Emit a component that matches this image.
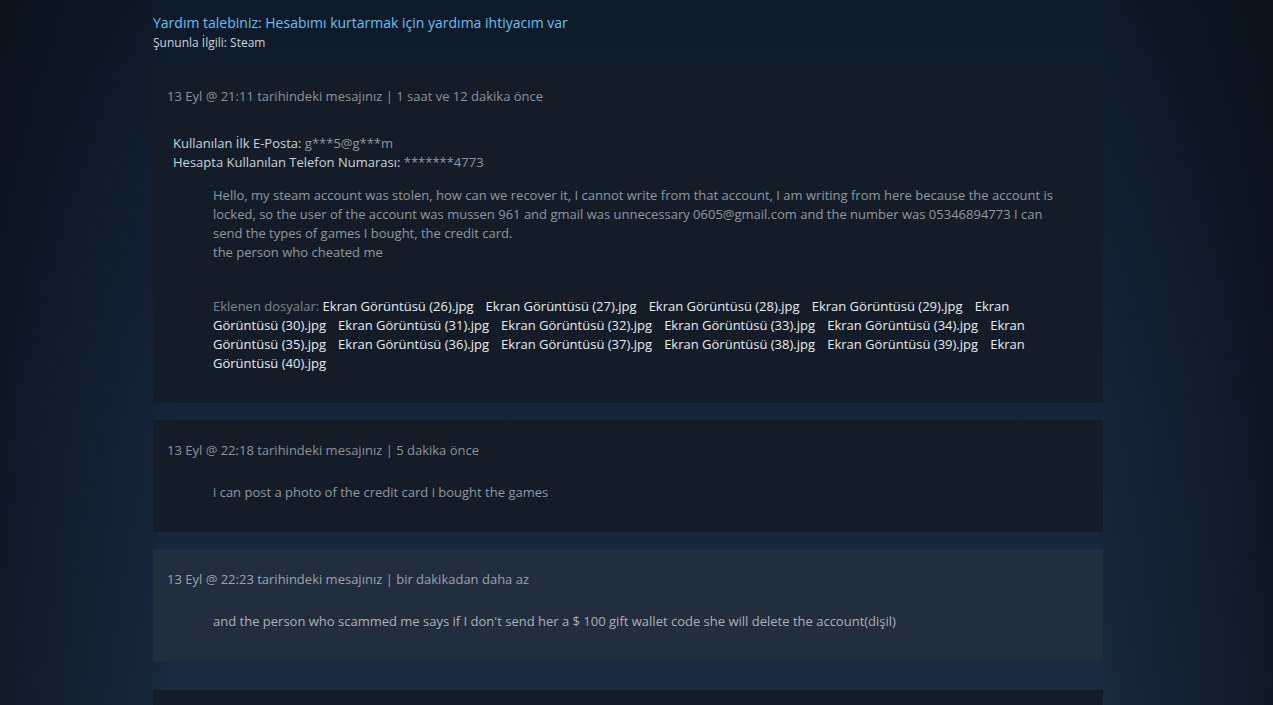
import React from "react";

const files = [26, 27, 28, 29, 30, 31, 32, 33, 34, 35, 36, 37, 38, 39, 40];

function Header({ children }) {
  return <div className="text-[13px] leading-[18px] text-[#8b929a]">{children}</div>;
}

export default function App() {
  return (
    <div
      className="min-h-[705px] w-full overflow-hidden bg-[linear-gradient(90deg,rgba(8,12,18,0.55)_0%,rgba(8,12,18,0)_14%,rgba(8,12,18,0)_86%,rgba(8,12,18,0.6)_100%),linear-gradient(180deg,#0f1a28_0%,#17253b_55%,#1c2b3f_100%)] pl-[153px] pt-[14px]"
      style={{ fontFamily: '"Open Sans", "Liberation Sans", Arial, sans-serif' }}
    >
      <div className="w-[950px]">
        <div className="text-[14px] leading-[18px] text-[#66c0f4]">
          Yardım talebiniz: Hesabımı kurtarmak için yardıma ihtiyacım var
        </div>
        <div className="text-[12px] leading-[16px] text-[#c6d4df] mt-[3px]">Şununla İlgili: Steam</div>

        {/* Card 1 */}
        <div className="mt-[14px] bg-[#141d27] px-[14px] pt-[22px] pb-[30px]">
          <Header>13 Eyl @ 21:11 tarihindeki mesajınız | 1 saat ve 12 dakika önce</Header>
          <div className="mt-[29px] ml-[6px] text-[13px] leading-[19px]">
            <div>
              <span className="text-[#c6d4df]">Kullanılan İlk E-Posta: </span>
              <span className="text-[#8f98a0]">g***5@g***m</span>
            </div>
            <div>
              <span className="text-[#c6d4df]">Hesapta Kullanılan Telefon Numarası: </span>
              <span className="text-[#8f98a0]">*******4773</span>
            </div>
          </div>
          <div className="mt-[14px] ml-[46px] mr-[30px] text-[13px] leading-[19px] text-[#8f98a0]">
            Hello, my steam account was stolen, how can we recover it, I cannot write from that account, I am writing from here because the account is locked, so the user of the account was mussen 961 and gmail was unnecessary 0605@gmail.com and the number was 05346894773 I can send the types of games I bought, the credit card.
            <br />
            the person who cheated me
          </div>
          <div className="mt-[35px] ml-[46px] mr-[30px] text-[13px] leading-[19px]">
            <span className="text-[#7a8591]">Eklenen dosyalar: </span>
            {files.map((n, i) => (
              <React.Fragment key={n}>
                <span className="text-[#e8ecef] mr-[2px]">Ekran Görüntüsü ({n}).jpg</span>
                {i < files.length - 1 ? "\u00a0\u00a0 " : null}
              </React.Fragment>
            ))}
          </div>
        </div>

        {/* Card 2 */}
        <div className="mt-[17px] bg-[#141d27] px-[14px] pt-[21px] pb-[30px]">
          <Header>13 Eyl @ 22:18 tarihindeki mesajınız | 5 dakika önce</Header>
          <div className="mt-[24px] ml-[46px] text-[13px] leading-[19px] text-[#8f98a0]">
            i can post a photo of the credit card i bought the games
          </div>
        </div>

        {/* Card 3 */}
        <div className="mt-[17px] bg-[#222d3d] px-[14px] pt-[21px] pb-[30px]">
          <div className="text-[13px] leading-[18px] text-[#9aa3ad]">
            13 Eyl @ 22:23 tarihindeki mesajınız | bir dakikadan daha az
          </div>
          <div className="mt-[24px] ml-[46px] text-[13px] leading-[19px] text-[#acb2b8]">
            and the person who scammed me says if I don't send her a $ 100 gift wallet code she will delete the account(dişil)
          </div>
        </div>

        {/* Card 4 (partially visible) */}
        <div className="mt-[29px] h-[80px] bg-[#141d27]" />
      </div>
    </div>
  );
}
